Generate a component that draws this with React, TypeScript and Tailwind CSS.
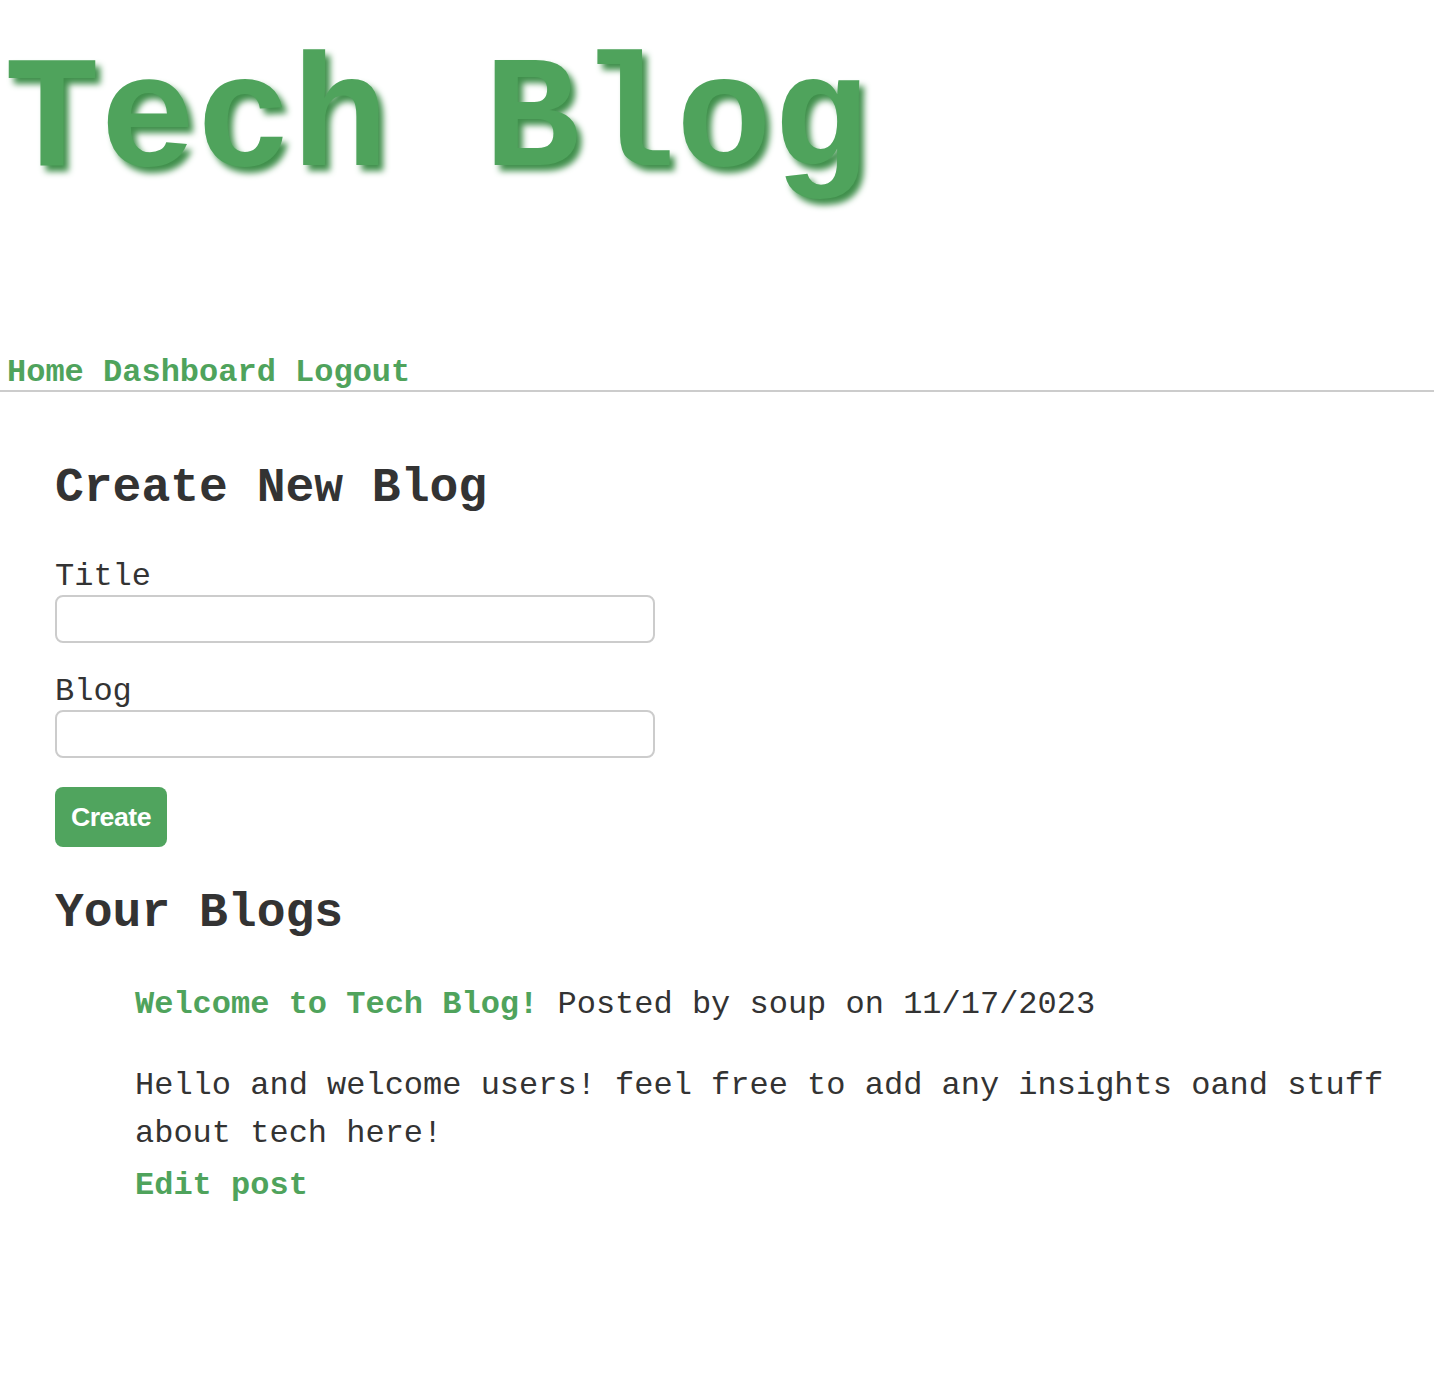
export default function App() {
  return (
    <div className="min-h-[1398px] bg-white font-['Liberation_Mono','Courier_New',monospace] text-[#333]">
      <header>
        <h1 className="pl-[4px] pt-[43px] text-[160px] font-bold leading-none text-[#4fa35c] [text-shadow:5px_6px_6px_#3f8f4b]">
          Tech Blog
        </h1>
        <nav className="mt-[152px] border-b-2 border-[#ccc] px-[7px] text-[32px] font-bold leading-[35px] text-[#4fa35c]">
          <a href="#">Home</a> <a href="#">Dashboard</a> <a href="#">Logout</a>
        </nav>
      </header>

      <main className="pl-[55px]">
        <h2 className="mt-[72px] text-[48px] font-bold leading-[48px]">Create New Blog</h2>
        <form className="flex flex-col items-start">
          <label className="mt-[46px] text-[32px] leading-[37px]">Title</label>
          <input className="h-[48px] w-[600px] rounded-lg border-2 border-[#ccc]" type="text" />
          <label className="mt-[30px] text-[32px] leading-[37px]">Blog</label>
          <input className="h-[48px] w-[600px] rounded-lg border-2 border-[#ccc]" type="text" />
          <button
            type="button"
            className="mt-[29px] flex h-[60px] w-[112px] items-center justify-center rounded-lg bg-[#50a45e] font-['Liberation_Sans',Arial,sans-serif] text-[26.67px] font-bold tracking-[-0.5px] text-white"
          >
            Create
          </button>
        </form>

        <h2 className="mt-[42px] text-[48px] font-bold leading-[48px]">Your Blogs</h2>
        <article className="ml-[80px]">
          <div className="mt-[50px] text-[32px] leading-[36px]">
            <a href="#" className="font-bold text-[#4fa35c]">Welcome to Tech Blog!</a> Posted by soup on 11/17/2023
          </div>
          <p className="mt-[39px] text-[32px] leading-[48px]">
            Hello and welcome users! feel free to add any insights oand stuff about tech here!
          </p>
          <a href="#" className="mt-[10px] block text-[32px] font-bold leading-[36px] text-[#4fa35c]">
            Edit post
          </a>
        </article>
      </main>
    </div>
  );
}
